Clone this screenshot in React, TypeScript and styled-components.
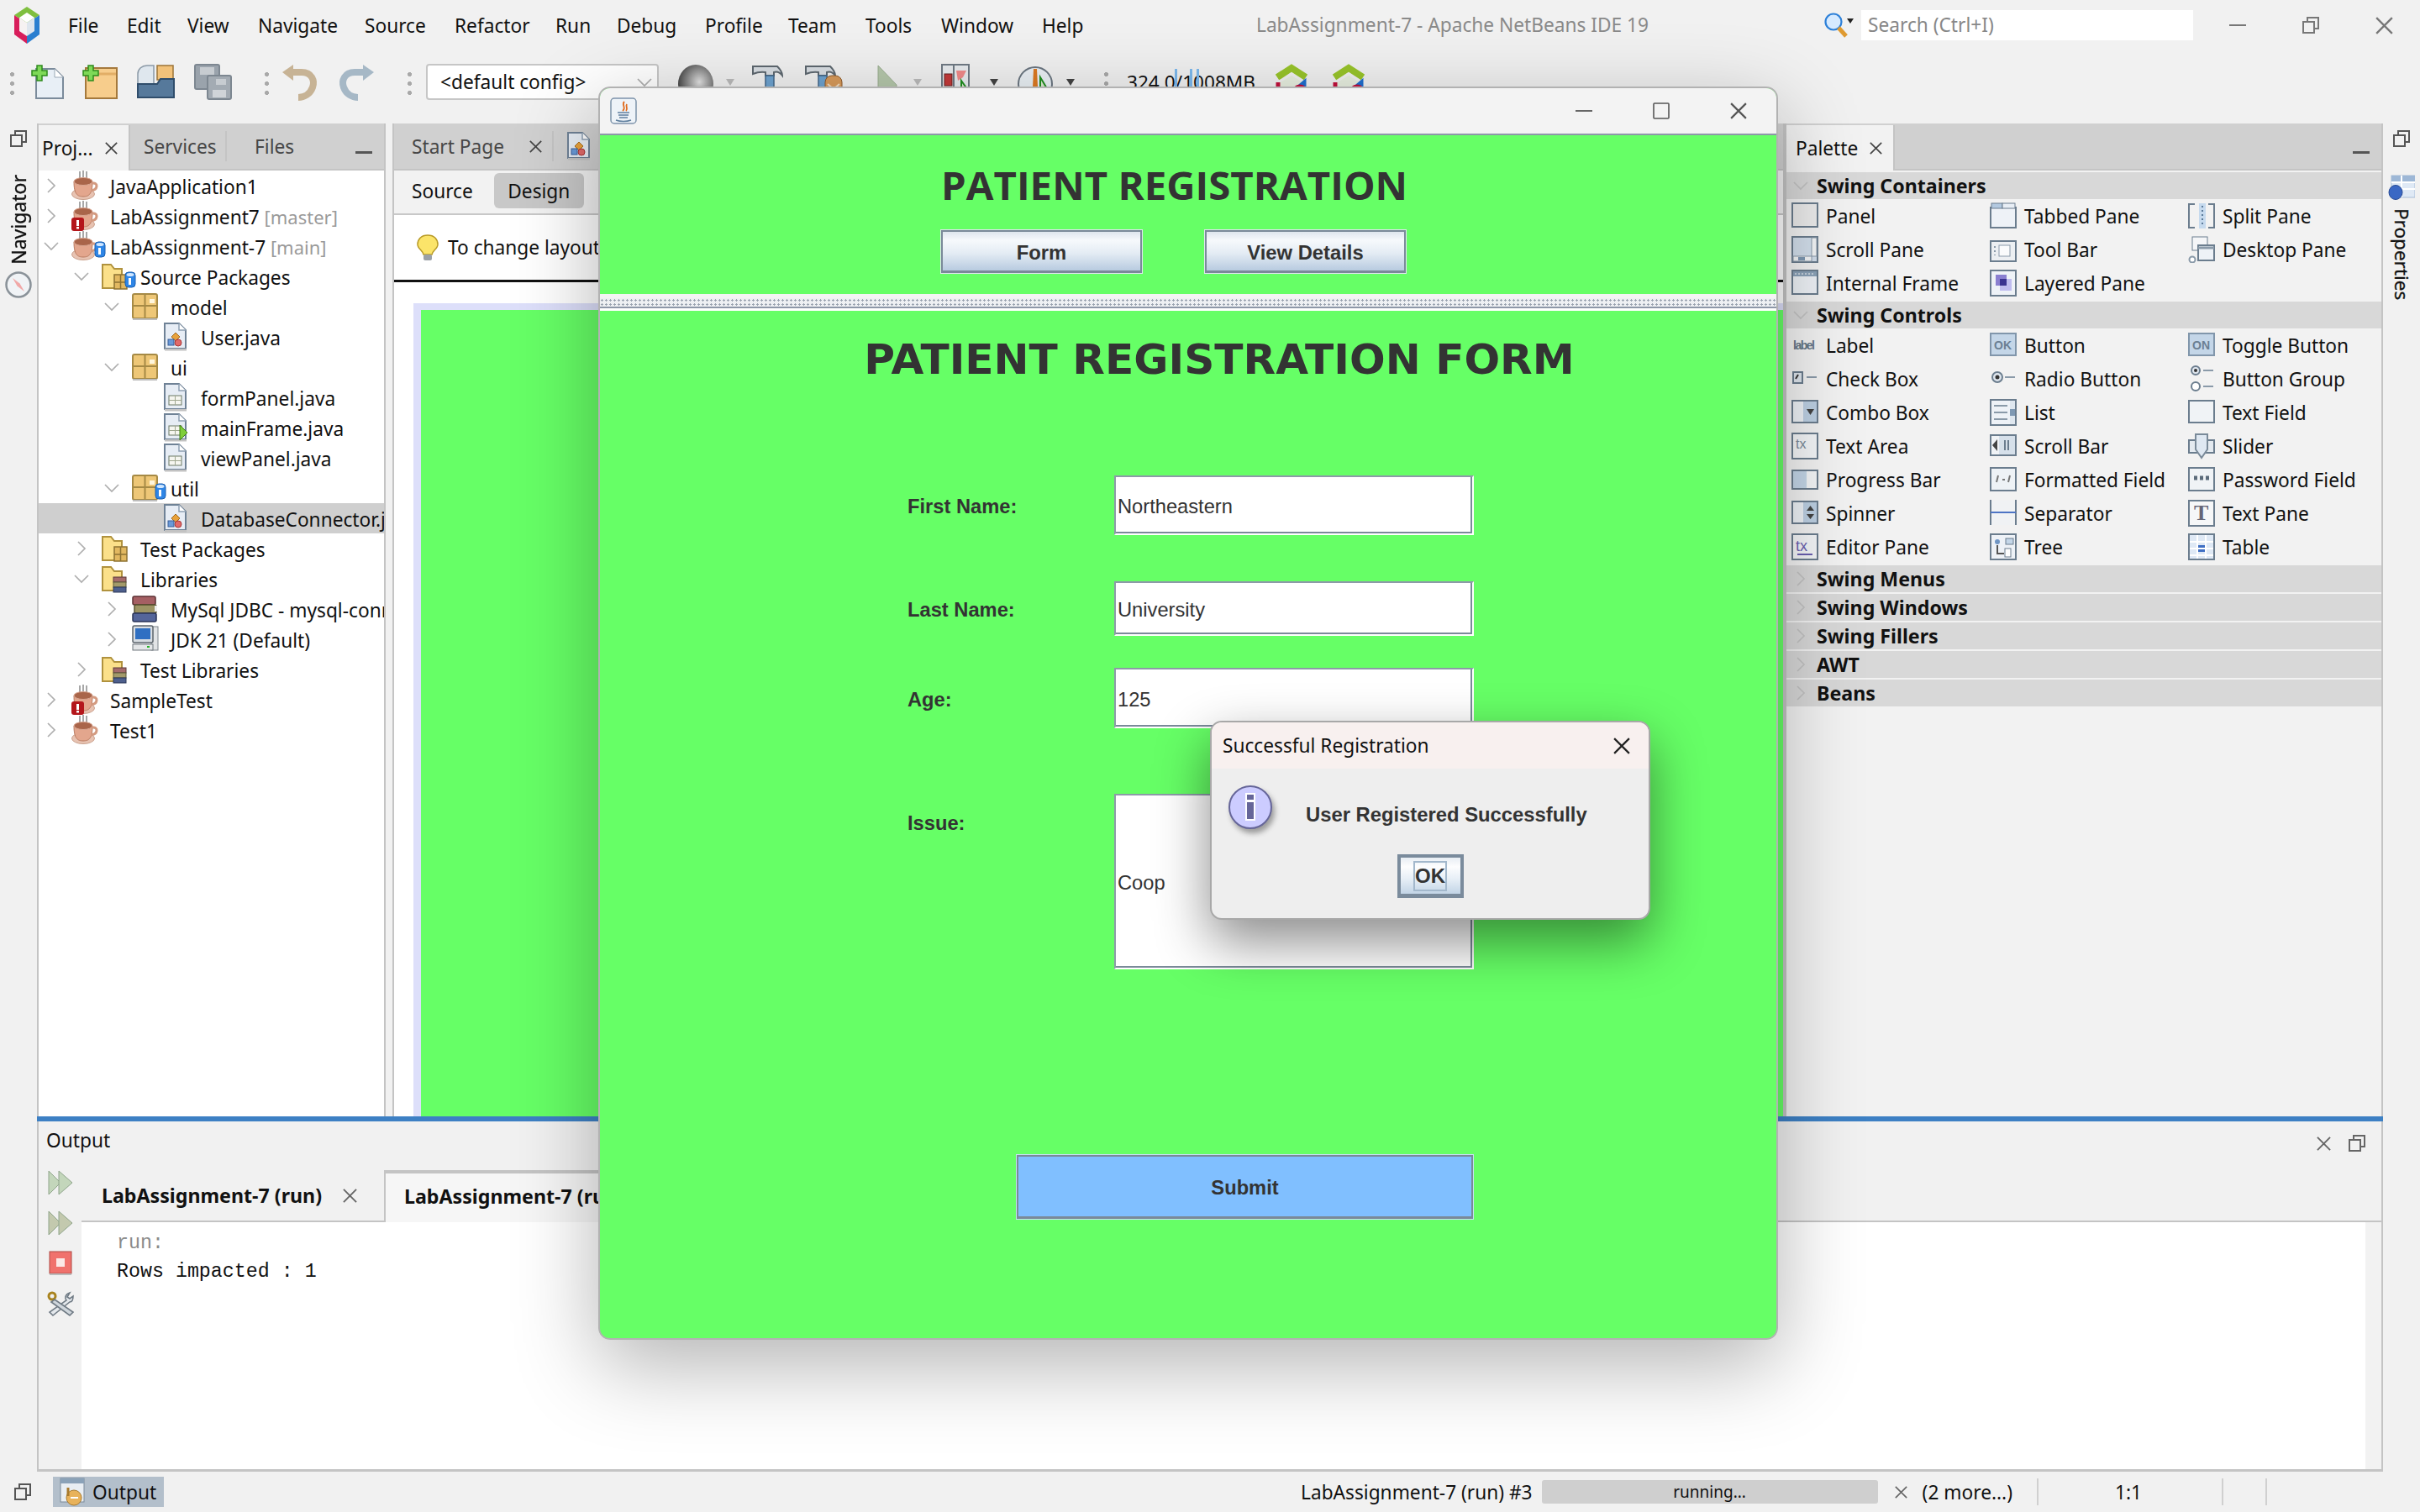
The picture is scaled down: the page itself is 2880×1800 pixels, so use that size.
import React from "react";
import styled, { createGlobalStyle } from "styled-components";

const SANS = `"Noto Sans", "Open Sans", sans-serif`;
const ARIAL = `"Liberation Sans", Arial, sans-serif`;

const Global = createGlobalStyle`
  html, body { margin: 0; padding: 0; background: #f0f0f0; }
  * { box-sizing: border-box; }
`;

const Frame = styled.div`
  position: relative;
  width: 2880px;
  height: 1800px;
  display: flex;
  flex-direction: column;
  overflow: hidden;
  background: #f1f1f1;
  font-family: ${SANS};
  font-size: 22.7px;
  color: #111;
`;

/* ---------- menu + toolbar ---------- */

const MenuBar = styled.div`
  height: 60px;
  flex-shrink: 0;
  display: flex;
  align-items: center;
  padding-left: 17px;
`;

const MenuList = styled.div`
  display: flex;
  margin-left: 34px;
`;

const MenuItem = styled.span<{ $w: number }>`
  width: ${(p) => p.$w}px;
  white-space: nowrap;
`;

const AppTitle = styled.div`
  position: absolute;
  left: 1495px;
  top: 14px;
  color: #8a8a8a;
  white-space: nowrap;
`;

const SearchArea = styled.div`
  margin-left: auto;
  display: flex;
  align-items: center;
`;

const SearchBox = styled.div`
  width: 395px;
  height: 36px;
  margin-left: 8px;
  padding-left: 8px;
  background: #fff;
  color: #888;
  line-height: 36px;
`;

const WinButtons = styled.div`
  display: flex;
  align-items: center;
  gap: 67px;
  margin-left: 43px;
  margin-right: 32px;
`;

const ToolBar = styled.div`
  height: 87px;
  flex-shrink: 0;
  display: flex;
  align-items: center;
  padding-left: 12px;
  padding-bottom: 12px;
`;

const Grip = styled.div<{ $ml: number }>`
  margin-left: ${(p) => p.$ml}px;
  width: 5px;
  height: 30px;
  background: radial-gradient(circle, #a9a9a9 2.4px, transparent 2.6px) 0 0 / 5px 11px repeat-y;
`;

const Tool = styled.div<{ $ml: number; $mr?: number }>`
  margin-left: ${(p) => p.$ml}px;
  margin-right: ${(p) => p.$mr ?? 0}px;
  display: flex;
  align-items: center;
`;

const ConfigCombo = styled.div`
  width: 277px;
  height: 43px;
  margin-left: 17px;
  padding-left: 15px;
  display: flex;
  align-items: center;
  justify-content: space-between;
  background: #fff;
  border: 2px solid #c6c6c6;
  border-radius: 4px;
`;

const MemoryText = styled.span`
  position: relative;
  margin-left: 22px;
  font-size: 22.6px;
  white-space: nowrap;
  width: 170px;
`;

const MemoryTick = styled.i<{ $x: number }>`
  position: absolute;
  left: ${(p) => p.$x}px;
  top: 0;
  width: 3px;
  height: 30px;
  background: #7db9ee;
`;

/* ---------- workspace ---------- */

const Workspace = styled.div`
  flex: 1;
  display: flex;
  min-height: 0;
`;

const SideStrip = styled.div<{ $w: number }>`
  width: ${(p) => p.$w}px;
  flex-shrink: 0;
  display: flex;
  flex-direction: column;
  align-items: center;
  padding-top: 8px;
`;

const VerticalLabel = styled.div<{ $flip?: boolean; $mt: number; $size: number }>`
  margin-top: ${(p) => p.$mt}px;
  writing-mode: vertical-rl;
  transform: ${(p) => (p.$flip ? "rotate(180deg)" : "none")};
  font-size: ${(p) => p.$size}px;
  white-space: nowrap;
  -webkit-text-stroke: 0.3px #111;
`;

const StripIcon = styled.div<{ $mt: number }>`
  margin-top: ${(p) => p.$mt}px;
  display: flex;
`;

const CenterColumn = styled.div`
  flex: 1;
  display: flex;
  flex-direction: column;
  min-width: 0;
`;

const TopPanes = styled.div`
  height: 1182px;
  display: flex;
  flex-shrink: 0;
`;

const Pane = styled.div<{ $w: number; $ml?: number }>`
  width: ${(p) => p.$w}px;
  margin-left: ${(p) => p.$ml ?? 0}px;
  display: flex;
  flex-direction: column;
  border-left: 2px solid #c4c4c4;
  border-right: 2px solid #c4c4c4;
  min-height: 0;
  overflow: hidden;
`;

const TabStrip = styled.div`
  height: 56px;
  flex-shrink: 0;
  display: flex;
  align-items: stretch;
  background: #d0d0d0;
  border-bottom: 2px solid #c4c4c4;
`;

const ActiveTab = styled.div<{ $w: number }>`
  width: ${(p) => p.$w}px;
  margin-top: 2px;
  margin-bottom: -2px;
  padding: 0 13px 0 4px;
  display: flex;
  align-items: center;
  justify-content: space-between;
  background: #f2f2f2;
  border-right: 2px solid #c4c4c4;
`;

const TabCaption = styled.span`
  padding-left: 7px;
`;

const PlainTab = styled.div<{ $w: number; $pl: number; $sep?: boolean }>`
  width: ${(p) => p.$w}px;
  padding-left: ${(p) => p.$pl}px;
  padding-right: 14px;
  display: flex;
  align-items: center;
  justify-content: space-between;
  color: #474747;
  position: relative;
  &::after {
    content: "";
    display: ${(p) => (p.$sep ? "block" : "none")};
    position: absolute;
    right: 0;
    top: 9px;
    bottom: 9px;
    width: 2px;
    background: #c4c4c4;
  }
`;

const Minimize = styled.div`
  margin-left: auto;
  margin-right: 14px;
  align-self: center;
  width: 20px;
  height: 3px;
  margin-top: 14px;
  background: #555;
`;

const Tree = styled.div`
  flex: 1;
  background: #fff;
  overflow: hidden;
  white-space: nowrap;
`;

const TreeRow = styled.div<{ $depth: number; $selected?: boolean }>`
  height: 36px;
  padding-left: ${(p) => p.$depth * 36}px;
  display: flex;
  align-items: center;
  background: ${(p) => (p.$selected ? "#cfcfcf" : "transparent")};
`;

const Twist = styled.div`
  width: 39px;
  flex-shrink: 0;
  padding-left: 6px;
  display: flex;
  align-items: center;
`;

const NodeIcon = styled.div`
  position: relative;
  width: 32px;
  height: 34px;
  flex-shrink: 0;
  display: flex;
  align-items: center;
  justify-content: center;
`;

const NodeBadge = styled.div`
  position: absolute;
  right: -9px;
  bottom: -5px;
`;

const NodeText = styled.span`
  margin-left: 14px;
  padding-top: 2px;
`;

const Muted = styled.span`
  color: #9a9a9a;
  font-size: 22px;
`;

const SubTabs = styled.div`
  height: 53px;
  flex-shrink: 0;
  display: flex;
  align-items: center;
  padding-left: 21px;
  padding-bottom: 3px;
  background: #f2f2f2;
  border-bottom: 2px solid #c8c8c8;
`;

const DesignPill = styled.div`
  margin-left: 25px;
  width: 107px;
  height: 42px;
  border-radius: 6px;
  background: #c8c8c8;
  display: flex;
  align-items: center;
  justify-content: center;
`;

const HintBar = styled.div`
  height: 80px;
  flex-shrink: 0;
  display: flex;
  align-items: center;
  gap: 11px;
  padding-left: 27px;
  background: #fff;
  border-bottom: 3px solid #111;
  white-space: nowrap;
`;

const DesignArea = styled.div`
  flex: 1;
  background: #fff;
  padding: 25px 0 0 23px;
  display: flex;
`;

const CanvasEdge = styled.div`
  flex: 1;
  background: #dddffa;
  padding: 8px 0 0 9px;
  display: flex;
`;

const CanvasGreen = styled.div`
  flex: 1;
  background: #66ff66;
`;

const PaletteBody = styled.div`
  flex: 1;
  background: #f2f2f2;
  overflow: hidden;
`;

const GroupHead = styled.div`
  height: 32px;
  margin-top: 2px;
  display: flex;
  align-items: center;
  background: #d8d8d8;
  font-weight: 700;
  padding-left: 8px;
`;

const GroupName = styled.span`
  margin-left: 10px;
  font-size: 23.2px;
`;

const HeadTwist = styled.div`
  width: 18px;
  display: flex;
  justify-content: center;
`;

const PaletteGrid = styled.div`
  display: grid;
  grid-template-columns: repeat(3, 236px);
  grid-auto-rows: 40px;
  padding-left: 6px;
`;

const PaletteItem = styled.div`
  display: flex;
  align-items: center;
  gap: 9px;
  white-space: nowrap;
`;

/* ---------- output ---------- */

const BlueBar = styled.div`
  height: 6px;
  flex-shrink: 0;
  background: #3d80c4;
`;

const OutputPane = styled.div`
  flex: 1;
  display: flex;
  flex-direction: column;
  border-left: 2px solid #c4c4c4;
  border-right: 2px solid #c4c4c4;
  border-bottom: 3px solid #c4c4c4;
  min-height: 0;
`;

const OutputHead = styled.div`
  height: 58px;
  flex-shrink: 0;
  display: flex;
  align-items: center;
  padding: 0 19px 14px 9px;
`;

const OutputHeadIcons = styled.div`
  margin-left: auto;
  display: flex;
  align-items: center;
  gap: 21px;
  padding-top: 8px;
`;

const OutputBody = styled.div`
  flex: 1;
  display: flex;
  min-height: 0;
`;

const RunRail = styled.div`
  width: 51px;
  flex-shrink: 0;
  display: flex;
  flex-direction: column;
  align-items: center;
  gap: 18px;
`;

const OutputMain = styled.div`
  flex: 1;
  display: flex;
  flex-direction: column;
  min-width: 0;
`;

const OutputTabs = styled.div`
  height: 62px;
  flex-shrink: 0;
  display: flex;
  font-weight: 700;
  font-size: 23.2px;
  border-bottom: 2px solid #c4c4c4;
`;

const RunTab = styled.div`
  width: 360px;
  padding: 0 32px 0 24px;
  display: flex;
  align-items: center;
  justify-content: space-between;
  white-space: nowrap;
`;

const RunTabActive = styled.div`
  width: 400px;
  margin-bottom: -2px;
  padding: 0 0 4px 22px;
  display: flex;
  align-items: center;
  border-top: 4px solid #c4c4c4;
  border-left: 2px solid #c4c4c4;
  white-space: nowrap;
  background: #f6f6f6;
`;

const Console = styled.div`
  flex: 1;
  display: flex;
`;

const ConsoleText = styled.div`
  flex: 1;
  background: #fff;
  padding: 8px 0 0 42px;
  font-family: "Liberation Mono", "Courier New", monospace;
  font-size: 23.3px;
  line-height: 34px;
`;

const RunLine = styled.div`
  color: #8a8a8a;
`;

const ScrollGutter = styled.div`
  width: 19px;
  background: #f2f2f2;
`;

/* ---------- status bar ---------- */

const StatusBar = styled.div`
  height: 48px;
  flex-shrink: 0;
  display: flex;
  align-items: center;
  padding-left: 17px;
`;

const OutputChip = styled.div`
  margin-left: 26px;
  width: 132px;
  height: 36px;
  padding-left: 8px;
  display: flex;
  align-items: center;
  gap: 7px;
  background: #b3bfcb;
`;

const StatusRight = styled.div`
  margin-left: auto;
  display: flex;
  align-items: center;
  padding-right: 182px;
  white-space: nowrap;
`;

const Progress = styled.div`
  width: 400px;
  height: 28px;
  margin-left: 11px;
  border-radius: 3px;
  background: #cfcfcf;
  font-size: 19px;
  display: flex;
  align-items: center;
  justify-content: center;
`;

const DismissTask = styled.span`
  margin-left: 20px;
  display: flex;
`;

const MoreTasks = styled.span`
  margin-left: 18px;
`;

const StatusSep = styled.div<{ $ml: number }>`
  width: 2px;
  height: 32px;
  margin-left: ${(p) => p.$ml}px;
  background: #d0d0d0;
`;

const CaretPos = styled.span`
  width: 218px;
  text-align: center;
  padding-right: 4px;
`;

/* ---------- floating java window ---------- */

const JavaWindow = styled.div`
  position: absolute;
  left: 712px;
  top: 103px;
  width: 1404px;
  height: 1492px;
  display: flex;
  flex-direction: column;
  border: 2px solid #b2b2b2;
  border-radius: 14px;
  overflow: hidden;
  background: #66ff66;
`;

const WindowShadow = styled.div`
  position: absolute;
  left: 712px;
  top: 103px;
  width: 1404px;
  height: 1492px;
  border-radius: 14px;
  box-shadow: 0 30px 100px rgba(0, 0, 0, 0.3);
`;

const WinTitle = styled.div`
  height: 56px;
  flex-shrink: 0;
  display: flex;
  align-items: center;
  padding: 0 35px 0 12px;
  background: #f3f3f3;
  border-bottom: 2px solid #8d97a8;
`;

const WinControls = styled.div`
  margin-left: auto;
  display: flex;
  align-items: center;
  gap: 72px;
`;

const TopForm = styled.div`
  height: 189px;
  flex-shrink: 0;
  padding: 33px 0 0 406px;
`;

const NavHeading = styled.div`
  width: 554px;
  font-family: "Open Sans", "Noto Sans", sans-serif;
  font-weight: 700;
  font-size: 47.4px;
  line-height: 52px;
  color: #333;
  text-align: center;
  white-space: nowrap;
`;

const NavButtons = styled.div`
  width: 553px;
  margin-top: 28px;
  display: flex;
  justify-content: space-between;
`;

const MetalButton = styled.div`
  width: 239px;
  height: 51px;
  display: flex;
  align-items: center;
  justify-content: center;
  padding-top: 4px;
  font-family: ${ARIAL};
  font-size: 23.8px;
  font-weight: 700;
  color: #333;
  background: linear-gradient(#dfe6ee 0, #f6f9fc 22%, #e4ecf4 55%, #b8cbe0 100%);
  border: 2px solid #7a8a99;
  border-bottom-width: 3px;
  outline: 1px solid #dfe6ee;
`;

const Divider = styled.div`
  height: 20px;
  flex-shrink: 0;
  border-top: 5px solid #f4f4f4;
  border-bottom: 3px solid #fff;
  box-shadow: inset 0 -2px 0 #8d97a8;
  background: radial-gradient(circle, #9aa3b0 1px, transparent 1.3px) 0 0 / 5px 5px #eef0f3;
`;

const MainForm = styled.div`
  flex: 1;
  padding-left: 366px;
  font-family: ${ARIAL};
  font-size: 23.7px;
  color: #333;
`;

const FormHeading = styled.div`
  margin: 30px 0 110px -329px;
  width: 1400px;
  font-family: "DejaVu Sans", sans-serif;
  font-size: 50.2px;
  line-height: 56px;
  font-weight: 700;
  color: #333;
  text-align: center;
  white-space: nowrap;
`;

const FormRow = styled.div<{ $mt: number }>`
  display: flex;
  align-items: center;
  margin-top: ${(p) => p.$mt}px;
`;

const FieldLabel = styled.label<{ $top?: number }>`
  width: 246px;
  font-weight: 700;
  line-height: 30px;
  align-self: ${(p) => (p.$top ? "flex-start" : "center")};
  margin-top: ${(p) => p.$top ?? 3}px;
`;

const Field = styled.div<{ $h: number }>`
  width: 428px;
  height: ${(p) => p.$h}px;
  padding: 4px 0 0 2px;
  display: flex;
  align-items: center;
  background: #fff;
  border-top: 2px solid #8d9aa8;
  border-left: 2px solid #8d9aa8;
  border-right: 2px solid #fff;
  border-bottom: 2px solid #fff;
  box-shadow: inset -2px -2px 0 #7a8a99;
`;

const SubmitButton = styled.div`
  width: 543px;
  height: 76px;
  margin: 221px 0 0 130px;
  padding-top: 3px;
  display: flex;
  align-items: center;
  justify-content: center;
  font-weight: 700;
  background: #80bfff;
  border: 2px solid #7a8a99;
  border-bottom-width: 3px;
  outline: 1px solid #c6e0f7;
`;

/* ---------- message dialog ---------- */

const Dialog = styled.div`
  position: absolute;
  left: 1440px;
  top: 858px;
  width: 524px;
  height: 237px;
  display: flex;
  flex-direction: column;
  background: #eeeeee;
  border: 2px solid #a8a8a8;
  border-radius: 14px;
  overflow: hidden;
  box-shadow: 0 26px 64px rgba(0, 0, 0, 0.46);
`;

const DialogTitle = styled.div`
  height: 55px;
  flex-shrink: 0;
  padding: 0 22px 0 13px;
  display: flex;
  align-items: center;
  justify-content: space-between;
  background: #f8f0ef;
`;

const DialogBody = styled.div`
  display: flex;
  height: 102px;
  padding: 20px 0 0 20px;
`;

const DialogMessage = styled.div`
  margin: 21px 0 0 38px;
  font-family: ${ARIAL};
  font-size: 23.8px;
  font-weight: 700;
  line-height: 28px;
  color: #333;
  white-space: nowrap;
`;

const OkButton = styled.div`
  align-self: center;
  width: 79px;
  height: 52px;
  display: flex;
  align-items: center;
  justify-content: center;
  border: 4px solid #7a8b9c;
  border-bottom-width: 5px;
  background: linear-gradient(#e8eef4 0, #fdfdfe 25%, #e6eef6 60%, #c2d4e6 100%);
`;

const OkFocus = styled.div`
  width: 40px;
  height: 36px;
  display: flex;
  align-items: center;
  justify-content: center;
  border: 2px solid #a3b8cc;
  font-family: ${ARIAL};
  font-size: 24px;
  font-weight: 700;
  color: #333;
`;

const SoftDrop = styled.svg`
  filter: drop-shadow(3px 5px 3px rgba(0, 0, 0, 0.35));
`;

/* ---------- drawn icons ---------- */

const Cross = ({ s = 18, c = "#444", w = 2 }: { s?: number; c?: string; w?: number }) => (
  <svg width={s} height={s} viewBox="0 0 18 18">
    <path d="M1 1L17 17M17 1L1 17" stroke={c} strokeWidth={w} fill="none" />
  </svg>
);

const Restore = ({ c = "#555" }: { c?: string }) => (
  <svg width="20" height="20" viewBox="0 0 20 20" fill="none" stroke={c} strokeWidth="2">
    <rect x="1" y="6" width="13" height="13" />
    <path d="M6 6V1H19V14H14" />
  </svg>
);

const Twisty = ({ open, dim }: { open?: boolean; dim?: boolean }) => (
  <svg width="18" height="18" viewBox="0 0 18 18" fill="none" stroke={dim ? "#c2c2c2" : "#aeaeae"} strokeWidth="1.7">
    {open ? <path d="M1 5L9 13L17 5" /> : <path d="M5 1L13 9L5 17" />}
  </svg>
);

const NbLogo = () => (
  <svg width="30" height="44" viewBox="0 0 30 44">
    <path d="M15 0L30 10L15 20L0 10Z" fill="#7fbf3f" />
    <path d="M30 10V33L15 44V20Z" fill="#2b7fd0" />
    <path d="M0 10V33L15 44V20Z" fill="#d81e5b" />
    <path d="M15 7L24 13L15 19L6 13Z" fill="#fff" />
    <path d="M24 13V29L15 35V19Z" fill="#dfe6ee" />
    <path d="M6 13V29L15 35V19Z" fill="#f6f2f2" />
  </svg>
);

const Cup = ({ alert }: { alert?: boolean }) => (
  <svg width="32" height="36" viewBox="0 0 32 36">
    <path d="M10 1V11M14 0V11M18 1V11" stroke="#8b8b8b" strokeWidth="1.5" />
    <ellipse cx="14" cy="28" rx="13.5" ry="6.5" fill="#e8c3b2" stroke="#c9a08c" />
    <path d="M3 13C3 28 7 31 14 31S25 28 25 13Z" fill="#e3a68d" stroke="#b97a60" />
    <ellipse cx="14" cy="13" rx="11" ry="4.5" fill="#a9654a" stroke="#d9a793" />
    <path d="M25 15C32 14 32 23 23 24" fill="none" stroke="#d39a80" strokeWidth="3" />
    {alert && (
      <g>
        <rect x="0" y="20" width="15" height="16" rx="3" fill="#b4161b" />
        <rect x="6" y="23" width="3" height="7" fill="#fff" />
        <rect x="6" y="31" width="3" height="2.5" fill="#fff" />
      </g>
    )}
  </svg>
);

const DbBadge = () => (
  <svg width="14" height="22" viewBox="0 0 14 22">
    <rect x="1" y="2" width="12" height="18" rx="4" fill="#2f86e6" stroke="#1b5fb0" />
    <ellipse cx="7" cy="5" rx="4.5" ry="2" fill="#cfe6ff" />
    <rect x="5" y="9" width="3" height="8" fill="#fff" />
  </svg>
);

const SourceFolder = ({ inner }: { inner: "pkg" | "lib" }) => (
  <svg width="32" height="34" viewBox="0 0 32 34">
    <path d="M1 31V3H11L15 8H24V31Z" fill="#fbe08a" stroke="#b0923e" strokeWidth="2" />
    {inner === "pkg" ? (
      <g>
        <rect x="15" y="15" width="15" height="17" fill="#e2b860" stroke="#8d7232" strokeWidth="1.5" />
        <path d="M15 24H30M22.5 15V32" stroke="#8d7232" strokeWidth="1.5" />
      </g>
    ) : (
      <g>
        <rect x="14" y="15" width="15" height="6" fill="#a56b6b" stroke="#5d3b3b" />
        <rect x="14" y="21" width="15" height="6" fill="#a39a6a" stroke="#5d5a3b" />
        <rect x="14" y="27" width="15" height="6" fill="#4e5f8c" stroke="#2c3858" />
      </g>
    )}
  </svg>
);

const PackageBox = () => (
  <svg width="32" height="34" viewBox="0 0 32 34">
    <rect x="1" y="2" width="29" height="29" rx="2" fill="#eec777" stroke="#a68a45" strokeWidth="2" />
    <path d="M1 16H30M15.5 2V31" stroke="#a68a45" strokeWidth="2" />
    <rect x="21" y="8" width="6" height="5" fill="#fff6dd" />
    <rect x="1" y="31" width="29" height="2" fill="#bdbdbd" />
  </svg>
);

const JavaFile = ({ kind }: { kind: "bean" | "form" | "main" }) => (
  <svg width="28" height="34" viewBox="0 0 28 34">
    <path d="M1 1H18L26 9V31H1Z" fill="#e7edf5" stroke="#6f8296" strokeWidth="2" />
    <path d="M18 1V9H26" fill="#fff" stroke="#8fa0b2" strokeWidth="1.5" />
    <rect x="1" y="31" width="26" height="2.5" fill="#c2c2c2" />
    {kind === "bean" ? (
      <g>
        <path d="M14 12L19 17L14 22L9 17Z" fill="#e8a23c" stroke="#a36a1f" />
        <circle cx="17" cy="24" r="4" fill="#e06a6a" stroke="#a33" />
        <rect x="5" y="20" width="7" height="7" fill="#6a9ad8" stroke="#3a5f99" />
      </g>
    ) : (
      <g>
        <rect x="6" y="15" width="15" height="11" fill="#f6f6f0" stroke="#6d7b66" />
        <path d="M6 20.5H21M13.5 15V26" stroke="#a0a890" />
      </g>
    )}
    {kind === "main" && <path d="M19 14L28 23L19 32Z" fill="#7fce3a" stroke="#3e7f12" />}
  </svg>
);

const Books = () => (
  <svg width="32" height="34" viewBox="0 0 32 34">
    <rect x="1" y="2" width="27" height="10" rx="2" fill="#a55f63" stroke="#5c3033" strokeWidth="1.5" />
    <rect x="3" y="12" width="26" height="10" rx="2" fill="#9d9464" stroke="#57522f" strokeWidth="1.5" />
    <rect x="1" y="22" width="28" height="10" rx="2" fill="#54659a" stroke="#2a3558" strokeWidth="1.5" />
    <path d="M27 13H30V20H27" fill="#eee" />
  </svg>
);

const Computer = () => (
  <svg width="32" height="34" viewBox="0 0 32 34">
    <rect x="23" y="2" width="8" height="28" fill="#e2e4e6" stroke="#7e858c" />
    <rect x="1" y="1" width="24" height="20" rx="2" fill="#d8dde2" stroke="#5c646c" strokeWidth="1.5" />
    <rect x="4" y="4" width="18" height="13" fill="#2f6fc2" />
    <rect x="1" y="23" width="24" height="7" fill="#e4e6e8" stroke="#6f767d" />
    <rect x="18" y="25" width="3" height="2" fill="#28b328" />
  </svg>
);

const NewFileIcon = () => (
  <svg width="42" height="44" viewBox="0 0 42 44">
    <path d="M7 6H29L39 16V41H7Z" fill="#e8eff6" stroke="#7b8b9b" strokeWidth="2" />
    <path d="M29 6V16H39" fill="#fff" stroke="#9aa8b5" />
    <path d="M8 2H14V8H20V14H14V20H8V14H2V8H8Z" fill="#7ed957" stroke="#2e8b1c" strokeWidth="1.5" />
  </svg>
);

const NewProjectIcon = () => (
  <svg width="44" height="44" viewBox="0 0 44 44">
    <rect x="5" y="5" width="37" height="36" fill="#f7cd8c" stroke="#a5793c" strokeWidth="2" />
    <path d="M6 12H41" stroke="#e2ae66" strokeWidth="3" />
    <path d="M8 2H14V8H20V14H14V20H8V14H2V8H8Z" fill="#7ed957" stroke="#2e8b1c" strokeWidth="1.5" />
  </svg>
);

const OpenIcon = () => (
  <svg width="46" height="44" viewBox="0 0 46 44">
    <path d="M1 12C1 6 6 2 12 2L20 2V26H1Z" fill="#dfe7ee" stroke="#8b99a6" strokeWidth="1.5" />
    <rect x="24" y="2" width="19" height="17" fill="#f2c27a" stroke="#9c7437" strokeWidth="1.5" />
    <path d="M1 40V24H24L28 18H44V40Z" fill="#56799b" stroke="#2f4d6b" strokeWidth="2" />
  </svg>
);

const SaveAllIcon = () => (
  <svg width="46" height="44" viewBox="0 0 46 44">
    <rect x="1" y="1" width="29" height="29" rx="2" fill="#9aa3ac" stroke="#7d8791" strokeWidth="2" />
    <rect x="7" y="4" width="17" height="9" fill="#c7ccd1" />
    <rect x="16" y="14" width="28" height="28" rx="2" fill="#a3abb3" stroke="#7d8791" strokeWidth="2" />
    <rect x="22" y="31" width="16" height="9" fill="#d0d4d8" />
    <rect x="26" y="18" width="12" height="7" fill="#c7ccd1" />
  </svg>
);

const UndoIcon = () => (
  <svg width="44" height="44" viewBox="0 0 44 44" fill="none">
    <path d="M12 10H24C36 10 40 20 37 28C34 36 27 40 20 40" stroke="#c7b395" strokeWidth="8" />
    <path d="M1 10L14 1V20Z" fill="#c7b395" />
  </svg>
);

const RedoIcon = () => (
  <svg width="44" height="44" viewBox="0 0 44 44" fill="none">
    <path d="M32 10H20C8 10 4 20 7 28C10 36 17 40 24 40" stroke="#a6b8c6" strokeWidth="8" />
    <path d="M43 10L30 1V20Z" fill="#a6b8c6" />
  </svg>
);

const Drop = () => (
  <svg width="10" height="8" viewBox="0 0 10 8">
    <path d="M0 0H10L5 8Z" fill="#444" />
  </svg>
);

const DimDrop = () => (
  <svg width="10" height="8" viewBox="0 0 10 8">
    <path d="M0 0H10L5 8Z" fill="#bbb" />
  </svg>
);

const GlobeIcon = () => (
  <svg width="44" height="44" viewBox="0 0 44 44">
    <defs>
      <radialGradient id="globe" cx="0.6" cy="0.45" r="0.6">
        <stop offset="0" stopColor="#e4e4e4" />
        <stop offset="1" stopColor="#4a4a4a" />
      </radialGradient>
    </defs>
    <ellipse cx="22" cy="24" rx="21" ry="23" fill="url(#globe)" />
  </svg>
);

const Hammer = ({ clean }: { clean?: boolean }) => (
  <svg width="46" height="44" viewBox="0 0 46 44">
    <path d="M1 3H30C33 6 36 10 36 14C33 10 29 9 26 10V14H16V10C10 9 6 10 1 12Z" fill="#d8dde2" stroke="#5e6870" strokeWidth="2" />
    <rect x="16" y="14" width="10" height="30" fill="#6ea3d0" stroke="#44688a" strokeWidth="1.5" />
    {clean && (
      <g>
        <rect x="24" y="14" width="20" height="28" rx="8" fill="#d89a5a" stroke="#8c5a2c" />
        <path d="M27 24L41 36M41 24L27 36" stroke="#f3ddc0" strokeWidth="2" />
      </g>
    )}
  </svg>
);

const RunIcon = () => (
  <svg width="24" height="42" viewBox="0 0 24 42">
    <path d="M1 1L23 24V40H1Z" fill="#b5c7ab" stroke="#9caf92" />
  </svg>
);

const DebugIcon = () => (
  <svg width="40" height="44" viewBox="0 0 40 44">
    <rect x="1" y="1" width="32" height="42" fill="#e8ecef" stroke="#6f7a84" strokeWidth="2" />
    <path d="M15 1V43" stroke="#6f7a84" strokeWidth="2" />
    <rect x="4" y="12" width="9" height="14" fill="#c43a3a" stroke="#6b1f1f" />
    <path d="M18 8H30L26 16L20 20Z" fill="#f08a8a" />
    <path d="M24 20L38 40H24Z" fill="#dcead0" stroke="#1f8f1f" strokeWidth="2" />
  </svg>
);

const ProfileIcon = () => (
  <svg width="44" height="44" viewBox="0 0 44 44">
    <circle cx="22" cy="24" r="20" fill="#eaf0f5" stroke="#6b7681" strokeWidth="2" />
    <path d="M20 6H24L25 28H19Z" fill="#dd7a22" />
    <path d="M28 16L40 36H28Z" fill="#dcead0" stroke="#1f8f1f" strokeWidth="2" />
  </svg>
);

const NbMini = () => (
  <svg width="38" height="44" viewBox="0 0 38 44">
    <path d="M19 14L36 24V42H2V24Z" fill="#e8efe0" />
    <path d="M2 16L19 5L36 16" fill="none" stroke="#98c42a" strokeWidth="8" />
    <path d="M3 22V44" stroke="#c2103c" strokeWidth="5" />
    <path d="M35 20V30L28 26Z" fill="#1f6fd0" stroke="#1f6fd0" strokeWidth="3" />
    <circle cx="29" cy="34" r="8" fill="#fff" stroke="#c2103c" strokeWidth="3" />
  </svg>
);

const SearchIcon = () => (
  <svg width="36" height="30" viewBox="0 0 36 30">
    <circle cx="11" cy="11" r="9.5" fill="#d6eaff" stroke="#2d80d8" strokeWidth="2.2" />
    <path d="M17 18L26 28" stroke="#df9a30" strokeWidth="5" />
    <path d="M27 7H35L31 13Z" fill="#222" />
  </svg>
);

const Bulb = () => (
  <svg width="26" height="32" viewBox="0 0 26 32">
    <path d="M13 1C5 1 1 6 1 12C1 17 7 19 8 24H18C19 19 25 17 25 12C25 6 21 1 13 1Z" fill="#fbe46a" stroke="#b89a25" strokeWidth="1.5" />
    <rect x="8" y="24" width="10" height="7" rx="2" fill="#9aa0a6" />
  </svg>
);

const Compass = () => (
  <svg width="32" height="32" viewBox="0 0 32 32">
    <circle cx="16" cy="16" r="14.5" fill="#f0f3f6" stroke="#8a9299" strokeWidth="2.5" />
    <path d="M9 8L17.5 14.5L23 24L14.5 17.5Z" fill="#f0a8a8" />
  </svg>
);

const PropsIcon = () => (
  <svg width="32" height="30" viewBox="0 0 32 30">
    <rect x="4" y="1" width="28" height="26" fill="#dfe9f5" stroke="#a8bdd6" />
    <rect x="4" y="1" width="28" height="8" fill="#9db7d6" />
    <path d="M4 17H32M4 9H32M16 1V27" stroke="#fff" strokeWidth="2" />
    <ellipse cx="9" cy="21" rx="8" ry="8.5" fill="#3a68c4" stroke="#274a94" />
  </svg>
);

const JavaCup = () => (
  <svg width="32" height="32" viewBox="0 0 32 32">
    <rect x="1" y="1" width="30" height="30" rx="4" fill="#eef3f8" stroke="#7d93aa" strokeWidth="1.5" />
    <path d="M17 5C13 9 20 12 15 16M20 8C18 11 22 13 19 16" stroke="#e06a1c" strokeWidth="1.8" fill="none" />
    <path d="M9 18H23M10 21H22M11 24H21" stroke="#5f7f9e" strokeWidth="1.6" />
    <path d="M7 27C12 29 20 29 25 27" stroke="#5f7f9e" strokeWidth="1.4" fill="none" />
  </svg>
);

const RerunIcon = ({ tone }: { tone: string }) => (
  <svg width="30" height="30" viewBox="0 0 30 30">
    <path d="M1 1L15 15L1 29Z" fill={tone} stroke="#8fa58b" />
    <path d="M13 1L29 15L13 29Z" fill={tone} stroke="#8fa58b" />
  </svg>
);

const StopIcon = () => (
  <svg width="28" height="30" viewBox="0 0 28 30">
    <rect x="1" y="1" width="26" height="26" fill="#f0726d" stroke="#b04a45" />
    <rect x="9" y="9" width="10" height="10" fill="#fbe9e7" />
    <rect x="1" y="27" width="26" height="2" fill="#bbb" />
  </svg>
);

const ToolsIcon = () => (
  <svg width="32" height="32" viewBox="0 0 32 32" fill="none">
    <circle cx="6" cy="6" r="4" stroke="#a9831e" strokeWidth="3" />
    <path d="M27 2C21 4 21 9 23 11L3 25L7 29L27 13C30 13 31 9 31 6L27 9L24 7Z" fill="#e4e8ec" stroke="#6f7a84" strokeWidth="1.6" />
    <path d="M5 13L27 29L31 25L9 10Z" fill="#cfd6dc" stroke="#6f7a84" strokeWidth="1.6" />
  </svg>
);

const OutputGlyph = () => (
  <svg width="32" height="34" viewBox="0 0 32 34">
    <rect x="1" y="1" width="28" height="28" fill="#e9eef3" stroke="#7a8a99" />
    <rect x="1" y="1" width="28" height="6" fill="#8ba2b8" />
    <circle cx="17" cy="24" r="9" fill="#e8b25a" stroke="#a87a2c" />
    <path d="M10 12V22" stroke="#a87a2c" strokeWidth="3" />
    <path d="M13 24H22" stroke="#fff" strokeWidth="2" />
  </svg>
);

const InfoIcon = () => (
  <SoftDrop width="54" height="58" viewBox="0 0 54 58">
    <ellipse cx="26" cy="26" rx="25" ry="25" fill="#ccccff" stroke="#666699" strokeWidth="2" />
    <rect x="20" y="9" width="12" height="33" fill="#fff" />
    <rect x="22" y="11" width="8" height="6" fill="#666699" />
    <rect x="22" y="20" width="8" height="20" fill="#666699" />
  </SoftDrop>
);

const frame = "#6b7d8e";

const PaletteGlyphs: Record<string, React.ReactNode> = {
  Panel: <rect x="1" y="1" width="30" height="28" fill="#ececec" stroke={frame} strokeWidth="2" />,
  "Tabbed Pane": (
    <g>
      <rect x="1" y="6" width="30" height="24" fill="#eef2f7" stroke={frame} strokeWidth="2" />
      <rect x="2" y="1" width="13" height="6" fill="#b3c9e0" stroke={frame} />
      <rect x="15" y="1" width="15" height="6" fill="#e8eef5" stroke={frame} />
    </g>
  ),
  "Split Pane": (
    <g>
      <rect x="13" y="1" width="8" height="30" fill="#c6daee" />
      <path d="M8 2H1V30H8M24 2H31V30H24" fill="none" stroke={frame} strokeWidth="2" />
      <path d="M17 4V28" stroke="#5b7a99" strokeWidth="2" strokeDasharray="2 3" />
    </g>
  ),
  "Scroll Pane": (
    <g>
      <rect x="1" y="1" width="30" height="30" fill="#d3dfec" stroke={frame} strokeWidth="2" />
      <rect x="24" y="2" width="6" height="22" fill="#f4f6f8" stroke="#8a9aa9" />
      <rect x="2" y="24" width="22" height="6" fill="#f4f6f8" stroke="#8a9aa9" />
      <rect x="8" y="25" width="8" height="4" fill="#7f99b3" />
    </g>
  ),
  "Tool Bar": (
    <g>
      <rect x="1" y="6" width="30" height="24" fill="#eceff2" stroke={frame} strokeWidth="2" />
      <rect x="11" y="11" width="13" height="13" fill="#fafbfc" stroke="#8a9aa9" />
      <path d="M6 12V23" stroke="#8a9aa9" strokeDasharray="2 3" strokeWidth="2" />
    </g>
  ),
  "Desktop Pane": (
    <g>
      <rect x="5" y="1" width="18" height="16" fill="#f5f6f8" stroke={frame} />
      <rect x="12" y="11" width="19" height="18" fill="#eef2f7" stroke={frame} strokeWidth="2" />
      <path d="M12 14H31" stroke="#8a9aa9" strokeWidth="3" />
      <circle cx="5" cy="28" r="3.5" fill="#fff" stroke="#8a9aa9" strokeWidth="2" />
    </g>
  ),
  "Internal Frame": (
    <g>
      <rect x="1" y="1" width="30" height="28" fill="#eef2f7" stroke={frame} strokeWidth="2" />
      <rect x="2" y="2" width="28" height="6" fill="#8ba2b8" />
      <path d="M4 5H28" stroke="#fff" strokeDasharray="2 2" />
    </g>
  ),
  "Layered Pane": (
    <g>
      <rect x="1" y="1" width="30" height="30" fill="#eef2f7" stroke={frame} strokeWidth="2" />
      <rect x="7" y="6" width="13" height="13" fill="#8a7fd0" />
      <rect x="12" y="11" width="14" height="14" fill="#c0bcef" />
      <rect x="12" y="11" width="8" height="8" fill="#3b3390" />
    </g>
  ),
  Label: (
    <text x="2" y="21" fontFamily={ARIAL} fontSize="14" fontWeight="700" fill="#667788" letterSpacing="-1.5">
      label
    </text>
  ),
  Button: (
    <g>
      <rect x="1" y="2" width="30" height="26" fill="#c4d6e8" stroke="#8196ab" strokeWidth="2" />
      <text x="5" y="21" fontFamily={ARIAL} fontSize="14" fontWeight="700" fill="#6b7f93">
        OK
      </text>
    </g>
  ),
  "Toggle Button": (
    <g>
      <rect x="1" y="2" width="30" height="26" fill="#c4d6e8" stroke="#8196ab" strokeWidth="2" />
      <text x="5" y="21" fontFamily={ARIAL} fontSize="14" fontWeight="700" fill="#6b7f93">
        ON
      </text>
    </g>
  ),
  "Check Box": (
    <g>
      <rect x="2" y="8" width="11" height="13" fill="#dfe6ee" stroke={frame} strokeWidth="2" />
      <path d="M5 16L8 11" stroke="#333" strokeWidth="2" />
      <path d="M18 14H30" stroke="#8a9aa9" strokeWidth="2" />
    </g>
  ),
  "Radio Button": (
    <g>
      <circle cx="9" cy="14" r="6" fill="#dfe6ee" stroke={frame} strokeWidth="2" />
      <circle cx="9" cy="14" r="2.5" fill="#333" />
      <path d="M18 14H30" stroke="#8a9aa9" strokeWidth="2" />
    </g>
  ),
  "Button Group": (
    <g>
      <circle cx="9" cy="6" r="5" fill="#dfe6ee" stroke={frame} strokeWidth="2" />
      <circle cx="9" cy="6" r="2" fill="#333" />
      <circle cx="9" cy="25" r="5" fill="#fff" stroke={frame} strokeWidth="2" />
      <path d="M18 6H30M18 25H30" stroke="#8a9aa9" strokeWidth="2" />
    </g>
  ),
  "Combo Box": (
    <g>
      <rect x="1" y="2" width="30" height="26" fill="#eef2f7" stroke={frame} strokeWidth="2" />
      <rect x="14" y="3" width="16" height="24" fill="#bdd0e3" />
      <path d="M18 12H27L22.5 19Z" fill="#444" />
    </g>
  ),
  List: (
    <g>
      <rect x="1" y="1" width="30" height="30" fill="#eef2f7" stroke={frame} strokeWidth="2" />
      <rect x="24" y="2" width="6" height="28" fill="#dfe7ef" />
      <rect x="24" y="12" width="6" height="8" fill="#7f99b3" />
      <path d="M5 8H21M5 16H21M5 24H21" stroke="#8a9aa9" strokeWidth="2" />
    </g>
  ),
  "Text Field": <rect x="1" y="2" width="30" height="26" fill="#f0f3f6" stroke={frame} strokeWidth="2" />,
  "Text Area": (
    <g>
      <rect x="1" y="1" width="30" height="30" fill="#f4f6f8" stroke={frame} strokeWidth="2" />
      <text x="5" y="19" fontFamily={ARIAL} fontSize="16" fill="#7a8a99">
        tx
      </text>
    </g>
  ),
  "Scroll Bar": (
    <g>
      <rect x="1" y="3" width="30" height="24" fill="#d6e0ea" stroke={frame} strokeWidth="2" />
      <rect x="2" y="4" width="9" height="22" fill="#f0f3f6" />
      <path d="M9 8L3 15L9 22Z" fill="#444" />
      <path d="M18 9V21M22 9V21" stroke="#6b7d8e" strokeWidth="2" />
    </g>
  ),
  Slider: (
    <g>
      <path d="M1 9H31V24H1Z" fill="#e4eaf0" stroke={frame} strokeWidth="2" />
      <path d="M9 2H23V20L16 30L9 20Z" fill="#dfe8f2" stroke="#7a8a99" strokeWidth="2" />
    </g>
  ),
  "Progress Bar": (
    <g>
      <rect x="1" y="5" width="30" height="22" fill="#f4f6f8" stroke={frame} strokeWidth="2" />
      <rect x="2" y="6" width="16" height="20" fill="#c4d6e8" />
    </g>
  ),
  "Formatted Field": (
    <g>
      <rect x="1" y="2" width="30" height="27" fill="#eef2f6" stroke={frame} strokeWidth="2" />
      <path d="M8 19L10 11M15 16H18M22 19L24 11" stroke="#777" strokeWidth="2" />
    </g>
  ),
  "Password Field": (
    <g>
      <rect x="1" y="2" width="30" height="27" fill="#f0f3f6" stroke={frame} strokeWidth="2" />
      <path d="M7 14H25" stroke="#5b6b7a" strokeWidth="5" strokeDasharray="4 3" />
    </g>
  ),
  Spinner: (
    <g>
      <rect x="1" y="2" width="30" height="26" fill="#eef2f7" stroke={frame} strokeWidth="2" />
      <rect x="14" y="3" width="16" height="24" fill="#bdd0e3" />
      <path d="M18 13H27L22.5 7ZM18 17H27L22.5 23Z" fill="#444" />
    </g>
  ),
  Separator: (
    <g>
      <rect x="1" y="1" width="30" height="29" fill="#f0f2f4" />
      <path d="M1 0V30M31 0V30" stroke={frame} strokeWidth="2" />
      <path d="M1 15H31" stroke="#4d74c4" strokeWidth="2" />
    </g>
  ),
  "Text Pane": (
    <g>
      <rect x="1" y="1" width="30" height="30" fill="#f6f7f8" stroke={frame} strokeWidth="2" />
      <text x="7" y="24" fontFamily='"Liberation Serif", serif' fontSize="26" fontWeight="700" fill="#667">
        T
      </text>
    </g>
  ),
  "Editor Pane": (
    <g>
      <rect x="1" y="1" width="30" height="30" fill="#f4f6f8" stroke={frame} strokeWidth="2" />
      <text x="5" y="21" fontFamily={ARIAL} fontSize="18" fill="#6a5fb0">
        tx
      </text>
      <path d="M7 25H25" stroke="#6a5fb0" strokeWidth="2" />
    </g>
  ),
  Tree: (
    <g>
      <rect x="1" y="1" width="30" height="30" fill="#eef2f7" stroke={frame} strokeWidth="2" />
      <circle cx="9" cy="10" r="3" fill="#6f95c4" />
      <rect x="19" y="6" width="9" height="7" fill="#c4d6e8" stroke={frame} />
      <path d="M9 14V24H17" fill="none" stroke="#555" strokeWidth="2" />
      <rect x="18" y="18" width="7" height="10" fill="#fff" stroke={frame} />
    </g>
  ),
  Table: (
    <g>
      <rect x="1" y="1" width="30" height="30" fill="#dfe9f5" stroke={frame} strokeWidth="2" />
      <rect x="11" y="14" width="10" height="8" fill="#3f6fc4" />
      <path d="M2 10H30M2 18H30M2 26H30M11 2V30M21 2V30" stroke="#fff" strokeWidth="2" />
    </g>
  ),
};

const PaletteGlyph = ({ name }: { name: string }) => (
  <svg width="32" height="32" viewBox="0 0 32 32">
    {PaletteGlyphs[name]}
  </svg>
);

/* ---------- data ---------- */

type NodeKind = "cup" | "cupAlert" | "srcPkg" | "srcLib" | "pkg" | "bean" | "form" | "main" | "books" | "jdk";

type Node = {
  depth: number;
  twist?: "open" | "closed";
  icon: NodeKind;
  text: string;
  note?: string;
  badge?: boolean;
  selected?: boolean;
};

const TREE: Node[] = [
  { depth: 0, twist: "closed", icon: "cup", text: "JavaApplication1" },
  { depth: 0, twist: "closed", icon: "cupAlert", text: "LabAssignment7", note: "[master]" },
  { depth: 0, twist: "open", icon: "cup", text: "LabAssignment-7", note: "[main]", badge: true },
  { depth: 1, twist: "open", icon: "srcPkg", text: "Source Packages", badge: true },
  { depth: 2, twist: "open", icon: "pkg", text: "model" },
  { depth: 3, icon: "bean", text: "User.java" },
  { depth: 2, twist: "open", icon: "pkg", text: "ui" },
  { depth: 3, icon: "form", text: "formPanel.java" },
  { depth: 3, icon: "main", text: "mainFrame.java" },
  { depth: 3, icon: "form", text: "viewPanel.java" },
  { depth: 2, twist: "open", icon: "pkg", text: "util", badge: true },
  { depth: 3, icon: "bean", text: "DatabaseConnector.java", selected: true },
  { depth: 1, twist: "closed", icon: "srcPkg", text: "Test Packages" },
  { depth: 1, twist: "open", icon: "srcLib", text: "Libraries" },
  { depth: 2, twist: "closed", icon: "books", text: "MySql JDBC - mysql-connector-j-8.3.0.jar" },
  { depth: 2, twist: "closed", icon: "jdk", text: "JDK 21 (Default)" },
  { depth: 1, twist: "closed", icon: "srcLib", text: "Test Libraries" },
  { depth: 0, twist: "closed", icon: "cupAlert", text: "SampleTest" },
  { depth: 0, twist: "closed", icon: "cup", text: "Test1" },
];

const nodeIcon = (kind: NodeKind) => {
  switch (kind) {
    case "cup":
      return <Cup />;
    case "cupAlert":
      return <Cup alert />;
    case "srcPkg":
      return <SourceFolder inner="pkg" />;
    case "srcLib":
      return <SourceFolder inner="lib" />;
    case "pkg":
      return <PackageBox />;
    case "books":
      return <Books />;
    case "jdk":
      return <Computer />;
    default:
      return <JavaFile kind={kind} />;
  }
};

const MENU: [string, number][] = [
  ["File", 70],
  ["Edit", 72],
  ["View", 84],
  ["Navigate", 127],
  ["Source", 107],
  ["Refactor", 120],
  ["Run", 73],
  ["Debug", 105],
  ["Profile", 99],
  ["Team", 92],
  ["Tools", 90],
  ["Window", 120],
  ["Help", 60],
];

const CONTAINERS = ["Panel", "Tabbed Pane", "Split Pane", "Scroll Pane", "Tool Bar", "Desktop Pane", "Internal Frame", "Layered Pane"];

const CONTROLS = [
  "Label", "Button", "Toggle Button",
  "Check Box", "Radio Button", "Button Group",
  "Combo Box", "List", "Text Field",
  "Text Area", "Scroll Bar", "Slider",
  "Progress Bar", "Formatted Field", "Password Field",
  "Spinner", "Separator", "Text Pane",
  "Editor Pane", "Tree", "Table",
];

const COLLAPSED = ["Swing Menus", "Swing Windows", "Swing Fillers", "AWT", "Beans"];

const PaletteGroup = ({ title, items }: { title: string; items: string[] }) => (
  <>
    <GroupHead>
      <HeadTwist>
        <Twisty open dim />
      </HeadTwist>
      <GroupName>{title}</GroupName>
    </GroupHead>
    <PaletteGrid>
      {items.map((item) => (
        <PaletteItem key={item}>
          <PaletteGlyph name={item} />
          {item}
        </PaletteItem>
      ))}
    </PaletteGrid>
  </>
);

export default function App() {
  return (
    <Frame>
      <Global />

      <MenuBar>
        <NbLogo />
        <MenuList>
          {MENU.map(([label, w]) => (
            <MenuItem key={label} $w={w}>
              {label}
            </MenuItem>
          ))}
        </MenuList>
        <AppTitle>LabAssignment-7 - Apache NetBeans IDE 19</AppTitle>
        <SearchArea>
          <SearchIcon />
          <SearchBox>Search (Ctrl+I)</SearchBox>
          <WinButtons>
            <svg width="20" height="3" viewBox="0 0 20 3">
              <rect width="20" height="2" fill="#777" />
            </svg>
            <Restore c="#777" />
            <Cross s={21} c="#777" />
          </WinButtons>
        </SearchArea>
      </MenuBar>

      <ToolBar>
        <Grip $ml={0} />
        <Tool $ml={19}><NewFileIcon /></Tool>
        <Tool $ml={19}><NewProjectIcon /></Tool>
        <Tool $ml={22}><OpenIcon /></Tool>
        <Tool $ml={22}><SaveAllIcon /></Tool>
        <Grip $ml={38} />
        <Tool $ml={15}><UndoIcon /></Tool>
        <Tool $ml={23}><RedoIcon /></Tool>
        <Grip $ml={39} />
        <ConfigCombo>
          &lt;default config&gt;
          <Tool $ml={0} $mr={6}>
            <Twisty open />
          </Tool>
        </ConfigCombo>
        <Tool $ml={22}><GlobeIcon /></Tool>
        <Tool $ml={14}><DimDrop /></Tool>
        <Tool $ml={21}><Hammer /></Tool>
        <Tool $ml={17}><Hammer clean /></Tool>
        <Tool $ml={40}><RunIcon /></Tool>
        <Tool $ml={19}><DimDrop /></Tool>
        <Tool $ml={23}><DebugIcon /></Tool>
        <Tool $ml={18}><Drop /></Tool>
        <Tool $ml={22}><ProfileIcon /></Tool>
        <Tool $ml={15}><Drop /></Tool>
        <Grip $ml={35} />
        <MemoryText>
          <MemoryTick $x={57} />
          <MemoryTick $x={75} />
          <MemoryTick $x={83} />
          324.0/1008MB
        </MemoryText>
        <Tool $ml={7}><NbMini /></Tool>
        <Tool $ml={30}><NbMini /></Tool>
      </ToolBar>

      <Workspace>
        <SideStrip $w={44}>
          <Restore />
          <VerticalLabel $flip $mt={33} $size={23}>
            Navigator
          </VerticalLabel>
          <StripIcon $mt={8}>
            <Compass />
          </StripIcon>
        </SideStrip>

        <CenterColumn>
          <TopPanes>
            <Pane $w={415}>
              <TabStrip>
                <ActiveTab $w={109}>
                  Proj...
                  <Cross s={15} />
                </ActiveTab>
                <PlainTab $w={115} $pl={16} $sep>
                  Services
                </PlainTab>
                <PlainTab $w={110} $pl={33}>
                  Files
                </PlainTab>
                <Minimize />
              </TabStrip>
              <Tree>
                {TREE.map((node) => (
                  <TreeRow key={node.text} $depth={node.depth} $selected={node.selected}>
                    <Twist>{node.twist && <Twisty open={node.twist === "open"} />}</Twist>
                    <NodeIcon>
                      {nodeIcon(node.icon)}
                      {node.badge && (
                        <NodeBadge>
                          <DbBadge />
                        </NodeBadge>
                      )}
                    </NodeIcon>
                    <NodeText>
                      {node.text}
                      {node.note && <Muted> {node.note}</Muted>}
                    </NodeText>
                  </TreeRow>
                ))}
              </Tree>
            </Pane>

            <Pane $w={1657} $ml={8}>
              <TabStrip>
                <PlainTab $w={190} $pl={21} $sep>
                  Start Page
                  <Cross s={15} />
                </PlainTab>
                <PlainTab $w={60} $pl={16}>
                  <JavaFile kind="bean" />
                </PlainTab>
              </TabStrip>
              <SubTabs>
                Source
                <DesignPill>Design</DesignPill>
              </SubTabs>
              <HintBar>
                <Bulb />
                To change layout
              </HintBar>
              <DesignArea>
                <CanvasEdge>
                  <CanvasGreen />
                </CanvasEdge>
              </DesignArea>
            </Pane>

            <Pane $w={712}>
              <TabStrip>
                <ActiveTab $w={129}>
                  <TabCaption>Palette</TabCaption>
                  <Cross s={15} />
                </ActiveTab>
                <Minimize />
              </TabStrip>
              <PaletteBody>
                <PaletteGroup title="Swing Containers" items={CONTAINERS} />
                <PaletteGroup title="Swing Controls" items={CONTROLS} />
                {COLLAPSED.map((name) => (
                  <GroupHead key={name}>
                    <HeadTwist>
                      <Twisty dim />
                    </HeadTwist>
                    <GroupName>{name}</GroupName>
                  </GroupHead>
                ))}
              </PaletteBody>
            </Pane>
          </TopPanes>

          <BlueBar />

          <OutputPane>
            <OutputHead>
              Output
              <OutputHeadIcons>
                <Cross s={17} c="#666" />
                <Restore c="#666" />
              </OutputHeadIcons>
            </OutputHead>
            <OutputBody>
              <RunRail>
                <RerunIcon tone="#c3d6bb" />
                <RerunIcon tone="#c3c9ae" />
                <StopIcon />
                <ToolsIcon />
              </RunRail>
              <OutputMain>
                <OutputTabs>
                  <RunTab>
                    LabAssignment-7 (run)
                    <Cross s={17} c="#666" />
                  </RunTab>
                  <RunTabActive>LabAssignment-7 (run) #2</RunTabActive>
                </OutputTabs>
                <Console>
                  <ConsoleText>
                    <RunLine>run:</RunLine>
                    Rows impacted : 1
                  </ConsoleText>
                  <ScrollGutter />
                </Console>
              </OutputMain>
            </OutputBody>
          </OutputPane>
        </CenterColumn>

        <SideStrip $w={44}>
          <Restore />
          <StripIcon $mt={33}>
            <PropsIcon />
          </StripIcon>
          <VerticalLabel $mt={10} $size={22.5}>
            Properties
          </VerticalLabel>
        </SideStrip>
      </Workspace>

      <StatusBar>
        <Restore />
        <OutputChip>
          <OutputGlyph />
          Output
        </OutputChip>
        <StatusRight>
          LabAssignment-7 (run) #3
          <Progress>running...</Progress>
          <DismissTask>
            <Cross s={15} c="#666" />
          </DismissTask>
          <MoreTasks>(2 more...)</MoreTasks>
          <StatusSep $ml={29} />
          <CaretPos>1:1</CaretPos>
          <StatusSep $ml={0} />
          <StatusSep $ml={50} />
        </StatusRight>
      </StatusBar>

      <WindowShadow />
      <JavaWindow>
        <WinTitle>
          <JavaCup />
          <WinControls>
            <svg width="20" height="3" viewBox="0 0 20 3">
              <rect width="20" height="2" fill="#666" />
            </svg>
            <svg width="20" height="20" viewBox="0 0 20 20">
              <rect x="1" y="1" width="18" height="18" rx="1" fill="none" stroke="#555" strokeWidth="1.6" />
            </svg>
            <Cross s={20} c="#555" />
          </WinControls>
        </WinTitle>
        <TopForm>
          <NavHeading>PATIENT REGISTRATION</NavHeading>
          <NavButtons>
            <MetalButton>Form</MetalButton>
            <MetalButton>View Details</MetalButton>
          </NavButtons>
        </TopForm>
        <Divider />
        <MainForm>
          <FormHeading>PATIENT REGISTRATION FORM</FormHeading>
          <FormRow $mt={0}>
            <FieldLabel>First Name:</FieldLabel>
            <Field $h={71}>Northeastern</Field>
          </FormRow>
          <FormRow $mt={55}>
            <FieldLabel>Last Name:</FieldLabel>
            <Field $h={65}>University</Field>
          </FormRow>
          <FormRow $mt={38}>
            <FieldLabel>Age:</FieldLabel>
            <Field $h={72}>125</Field>
          </FormRow>
          <FormRow $mt={78}>
            <FieldLabel $top={20}>Issue:</FieldLabel>
            <Field $h={209}>Coop</Field>
          </FormRow>
          <SubmitButton>Submit</SubmitButton>
        </MainForm>
      </JavaWindow>

      <Dialog>
        <DialogTitle>
          Successful Registration
          <Cross s={20} c="#222" />
        </DialogTitle>
        <DialogBody>
          <InfoIcon />
          <DialogMessage>User Registered Successfully</DialogMessage>
        </DialogBody>
        <OkButton>
          <OkFocus>OK</OkFocus>
        </OkButton>
      </Dialog>
    </Frame>
  );
}
